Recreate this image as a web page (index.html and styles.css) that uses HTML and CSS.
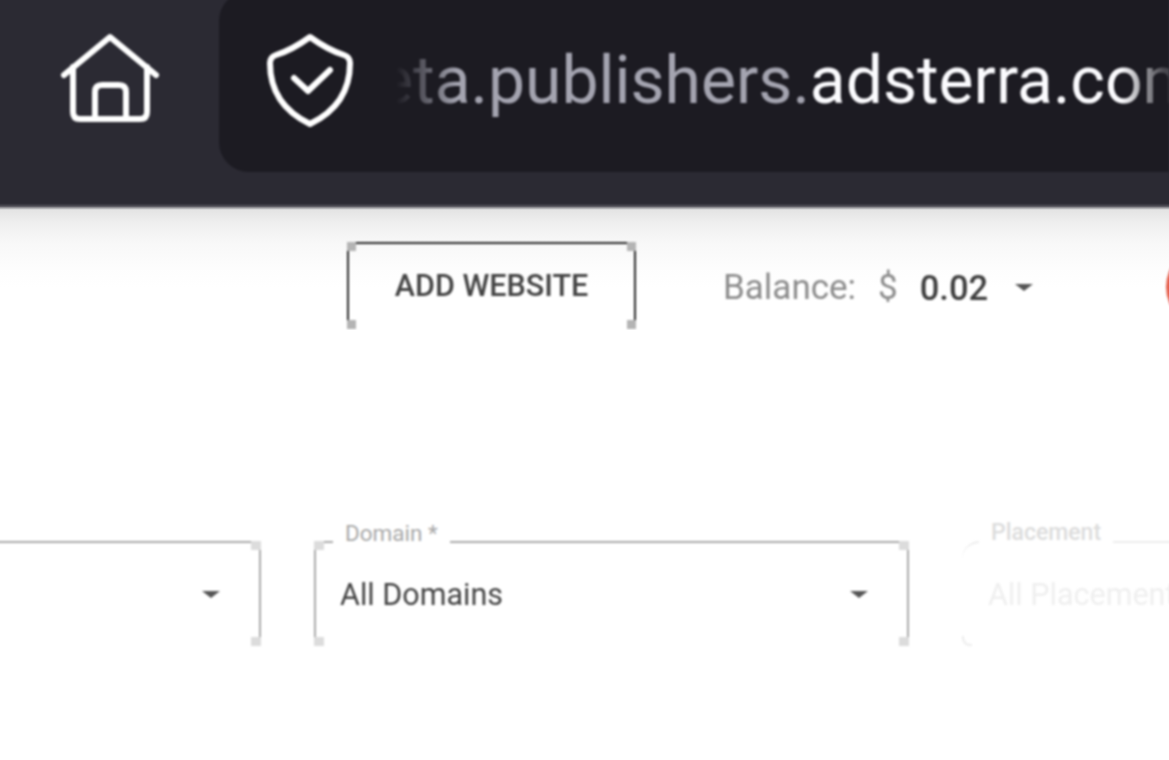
FILE: index.html
```html
<!DOCTYPE html>
<html lang="en">
<head>
  <meta charset="UTF-8">
  <title>Adsterra Publishers</title>
  <link rel="stylesheet" href="styles.css">
</head>
<body>
  <div class="toolbar">
    <svg class="toolbar-icon home-icon" viewBox="60 32 100 92">
      <path d="M64 75 L110 37 L156 75"/>
      <path d="M73 67 V112 Q73 119 80 119 H140 Q147 119 147 112 V67"/>
      <path d="M95 119 V92 Q95 85 102 85 H119 Q126 85 126 92 V119"/>
    </svg>
    <div class="url-bar">
      <svg class="toolbar-icon shield-icon" viewBox="266 32 88 96">
        <path d="M310 37 Q328 50 344 55 Q350 57 350 63 C350 92 335 112 310 124 C285 112 270 92 270 63 Q270 57 276 55 Q292 50 310 37 Z"/>
        <path class="check" d="M294 78 L308 91 L330 70"/>
      </svg>
      <div class="url-text">beta.publishers.<span class="host">adsterra.com</span></div>
    </div>
  </div>

  <div class="topbar">
    <button class="add-website">
      ADD WEBSITE
      <i class="corner tl"></i><i class="corner tr"></i><i class="corner bl"></i><i class="corner br"></i>
    </button>
    <div class="balance">
      <span class="balance-label">Balance:</span>
      <span class="balance-label currency">$</span>
      <span class="balance-value">0.02</span>
      <span class="caret"></span>
    </div>
    <div class="avatar"></div>
  </div>

  <div class="filters">
    <div class="field">
      <span class="field-value"></span>
      <span class="caret"></span>
      <i class="corner tr"></i><i class="corner br"></i>
    </div>
    <div class="field">
      <label class="field-label">Domain *</label>
      <span class="field-value">All Domains</span>
      <span class="caret"></span>
      <i class="corner tl"></i><i class="corner tr"></i><i class="corner bl"></i><i class="corner br"></i>
    </div>
    <div class="field disabled">
      <label class="field-label">Placement</label>
      <span class="field-value">All Placements</span>
    </div>
  </div>
</body>
</html>
```
FILE: styles.css
```css
html, body {
  height: 100%;
}

body {
  margin: 0;
  overflow: hidden;
  background-color: #fff;
  font-family: Roboto, "Liberation Sans", sans-serif;
}

.toolbar, .add-website, .balance, .avatar, .filters {
  filter: blur(0.9px);
}

/* bleeds past the window so the blur doesn't lighten the edges */
.toolbar {
  display: flex;
  height: 205px;
  margin: -4px -4px 0;
  padding: 4px 4px 0;
  background-color: #2b2a33;
  border-bottom: 3px solid #55545c;
}

.toolbar-icon {
  fill: none;
  stroke: #fff;
  stroke-width: 6;
  stroke-linecap: round;
  stroke-linejoin: round;
}

.home-icon {
  flex: none;
  width: 100px;
  height: 92px;
  margin: 32px 59px 0 60px;
}

.url-bar {
  flex: 1;
  display: flex;
  min-width: 0;
  height: 181px;
  margin-top: -9px;
  padding-left: 47px;
  overflow: hidden;
  background-color: #1c1b22;
  border-radius: 30px 0 0 30px;
  box-sizing: border-box;
}

.shield-icon {
  flex: none;
  width: 88px;
  height: 96px;
  margin-top: 41px;
}

.url-text {
  margin: 50px 0 0 -13px;
  font-size: 66px;
  line-height: 80px;
  white-space: nowrap;
  color: #a4a4b0;
  -webkit-mask-image: linear-gradient(90deg, transparent 55px, #000 116px, #000 781px, rgba(0, 0, 0, 0.2) 823px);
  mask-image: linear-gradient(90deg, transparent 55px, #000 116px, #000 781px, rgba(0, 0, 0, 0.2) 823px);
}

.host {
  color: #fbfbfe;
}

.topbar {
  display: flex;
  height: 122px;
  padding: 34px 0 0 347px;
  box-sizing: border-box;
  overflow: hidden;
  background: linear-gradient(#e2e2e2, #efefef 15px, #f8f8f8 35px, #fdfdfd 60px, #fff 80px);
}

.add-website {
  position: relative;
  flex: none;
  width: 289px;
  height: 87px;
  padding: 0 0 3px;
  background: none;
  border: solid #2a2a2a;
  border-width: 2px 2px 0;
  font-family: inherit;
  font-size: 30.5px;
  font-weight: 500;
  color: #444;
}

.corner {
  position: absolute;
  width: 9px;
  height: 9px;
  background-color: #b4b4b4;
}

.corner.tl { top: -2px; left: -2px; }
.corner.tr { top: -2px; right: -2px; }
.corner.bl { bottom: 0; left: -2px; }
.corner.br { bottom: 0; right: -2px; }

.balance {
  flex: none;
  display: flex;
  align-items: center;
  height: 91px;
  margin-left: 87px;
  font-size: 35px;
}

.balance-label {
  color: #8c8c8c;
}

.currency {
  margin-left: 22px;
}

.balance-value {
  margin-left: 22px;
  font-size: 34.5px;
  font-weight: 500;
  color: #3d3d3d;
}

.caret {
  width: 0;
  height: 0;
  border-style: solid;
  border-width: 7px 9px 0;
  border-color: #555 transparent transparent;
}

.balance .caret {
  margin-left: 27px;
}

.avatar {
  flex: none;
  width: 84px;
  height: 84px;
  margin: 3px 0 0 133px;
  border-radius: 50%;
  background-color: #e5604d;
}

.filters {
  display: flex;
  gap: 53px;
  margin: 211px 0 0 -334px;
}

.field {
  position: relative;
  flex: none;
  display: flex;
  align-items: center;
  justify-content: space-between;
  width: 595px;
  height: 105px;
  padding: 0 39px 0 24px;
  box-sizing: border-box;
  border: solid #aaa;
  border-width: 2px 2px 0;
}

.field .corner {
  width: 10px;
  height: 9px;
  background-color: #dcdcdc;
}

.field-label {
  position: absolute;
  top: -24px;
  left: 17px;
  padding: 0 12px;
  font-size: 22.5px;
  line-height: 28px;
  background-color: #fff;
  color: #a8a8a8;
}

.field-value {
  font-size: 30.5px;
  color: #444;
}

.field.disabled {
  padding-left: 26px;
  border-color: #ededed;
  border-width: 2px 0 0;
  border-top-left-radius: 18px;
}

.field.disabled::after {
  content: "";
  position: absolute;
  left: 0;
  bottom: 0;
  width: 8px;
  height: 8px;
  border: solid #ededed;
  border-width: 0 0 2px 2px;
  border-bottom-left-radius: 8px;
}

.field.disabled .field-label {
  font-size: 23px;
  color: #dcdcdc;
  font-weight: 500;
}

.field.disabled .field-value {
  color: #efefef;
}
```
